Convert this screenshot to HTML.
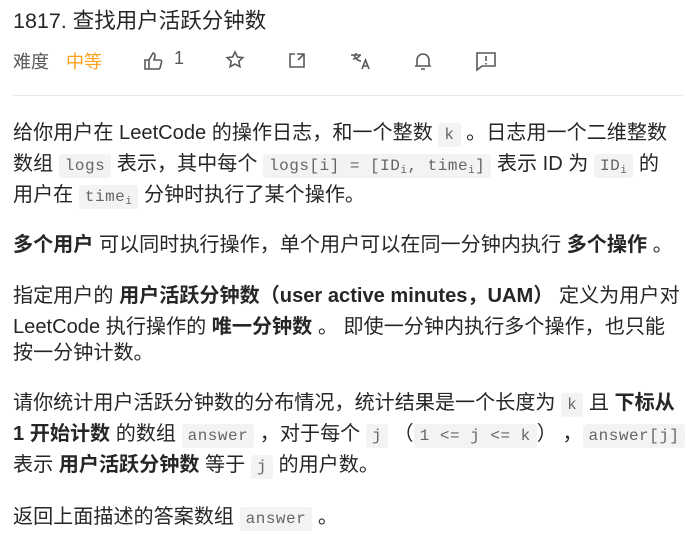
<!DOCTYPE html>
<html><head><meta charset="utf-8"><style>
body{margin:0;width:687px;height:534px;background:#fff;overflow:hidden;font-family:"Liberation Sans","Noto Sans CJK SC",sans-serif;color:#262626}
.t{position:absolute;left:13px;top:4px;font-size:21.5px;color:#262626}
.m{position:absolute;top:48px;font-size:18px;color:#595959}
.ic{position:absolute;top:50px}
.hr{position:absolute;left:13px;top:95px;width:670px;height:1px;background:#e8e8e8}
.l{position:absolute;left:13px;font-size:20.1px;white-space:nowrap;line-height:24px}
code{font-family:"Liberation Mono",monospace;font-size:16px;color:#666;background:#f3f3f3;border-radius:3px;padding:3px 6px;letter-spacing:0.5px}
b{font-weight:bold}
sub{font-size:11px;vertical-align:-3px}
</style></head><body>
<div class="t">1817. 查找用户活跃分钟数</div>
<div class="m" style="left:13px">难度</div>
<div class="m" style="left:66px;color:#ff9f1a">中等</div>
<svg class="ic" style="left:143px" width="22" height="22" viewBox="0 0 22 22" fill="none" stroke="#595959" stroke-width="1.6"><path d="M2 10h4v9H2zM6 10l4-7c2 0 2 2 2 3l-1 4h6c1 0 2 1 1.6 2l-1.6 6c-.3 1-1 1-2 1H6"/></svg>
<div class="m" style="left:174px">1</div>
<svg class="ic" style="left:225px" width="20" height="20" viewBox="0 0 20 20" fill="none" stroke="#595959" stroke-width="1.6"><path d="M10 2l2.4 5 5.4.6-4 3.7 1.1 5.4L10 14l-4.9 2.7 1.1-5.4-4-3.7L7.6 7z"/></svg>
<svg class="ic" style="left:287px" width="20" height="20" viewBox="0 0 20 20" fill="none" stroke="#595959" stroke-width="1.6"><path d="M8 4H3v13h14V9M10 4h7v5M17 4l-6 6"/></svg>
<svg class="ic" style="left:350px" width="22" height="22" viewBox="0 0 22 22" fill="none" stroke="#595959" stroke-width="1.6"><path d="M1 5h10M6 3v2M3 9c3 0 6-2 7-4M4 5c1 3 4 6 7 6M12 19l3.5-9 3.5 9M13.3 16h4.4"/></svg>
<svg class="ic" style="left:413px" width="20" height="22" viewBox="0 0 20 22" fill="none" stroke="#595959" stroke-width="1.6"><path d="M4 16V10a6 6 0 0 1 12 0v6zM2 16h16M8 19h4"/></svg>
<svg class="ic" style="left:475px" width="22" height="22" viewBox="0 0 22 22" fill="none" stroke="#595959" stroke-width="1.6"><path d="M2 3h18v13H7l-5 4z"/><path d="M11 6v5M11 13v1.5"/></svg>
<div class="hr"></div>
<div class="l" style="top:121px">给你用户在 LeetCode 的操作日志，和一个整数 <code>k</code> 。日志用一个二维整数</div>
<div class="l" style="top:152px">数组 <code>logs</code> 表示，其中每个 <code>logs[i] = [ID<sub>i</sub>, time<sub>i</sub>]</code> 表示 ID 为 <code>ID<sub>i</sub></code> 的</div>
<div class="l" style="top:183px">用户在 <code>time<sub>i</sub></code> 分钟时执行了某个操作。</div>
<div class="l" style="top:233px"><b>多个用户</b> 可以同时执行操作，单个用户可以在同一分钟内执行 <b>多个操作</b> 。</div>
<div class="l" style="top:284px">指定用户的 <b>用户活跃分钟数（user active minutes，UAM）</b> 定义为用户对</div>
<div class="l" style="top:315px">LeetCode 执行操作的 <b>唯一分钟数</b> 。 即使一分钟内执行多个操作，也只能</div>
<div class="l" style="top:341px">按一分钟计数。</div>
<div class="l" style="top:391px">请你统计用户活跃分钟数的分布情况，统计结果是一个长度为 <code>k</code> 且 <b>下标从</b></div>
<div class="l" style="top:422px"><b>1 开始计数</b> 的数组 <code>answer</code> ，对于每个 <code>j</code> （<code>1 &lt;= j &lt;= k</code>） ，<code>answer[j]</code></div>
<div class="l" style="top:453px">表示 <b>用户活跃分钟数</b> 等于 <code>j</code> 的用户数。</div>
<div class="l" style="top:505px">返回上面描述的答案数组 <code>answer</code> 。</div>
</body></html>
